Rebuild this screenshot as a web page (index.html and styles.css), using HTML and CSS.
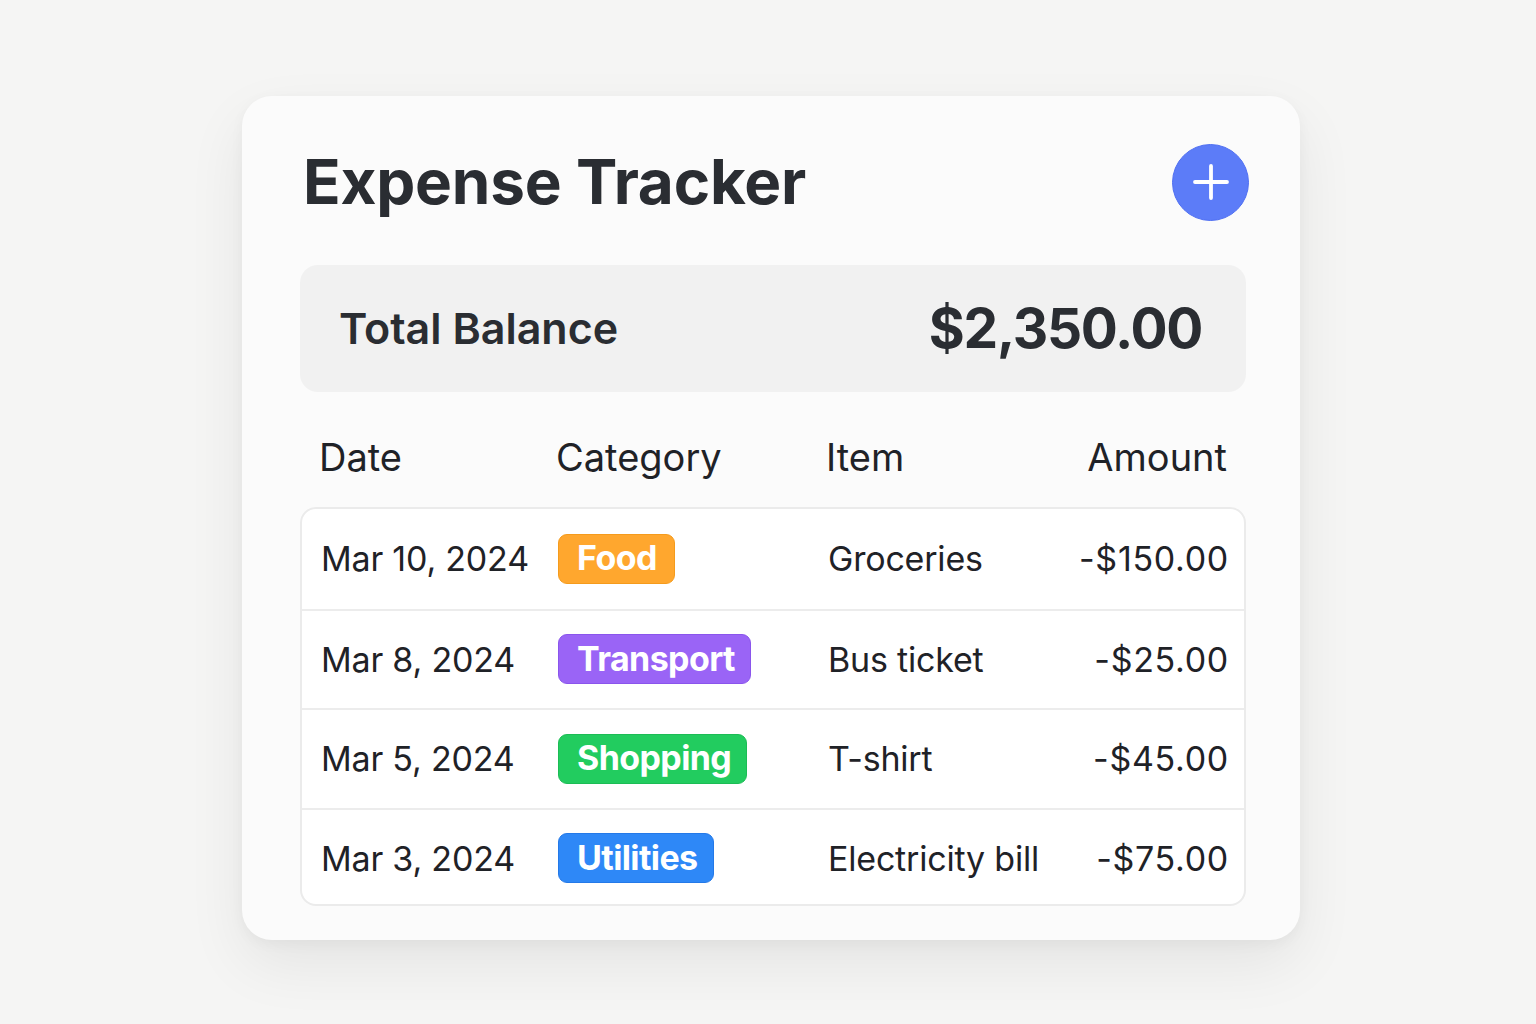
FILE: index.html
```html
<!DOCTYPE html>
<html lang="en">
<head>
<meta charset="utf-8">
<title>Expense Tracker</title>
<link rel="stylesheet" href="styles.css">
</head>
<body>
<main class="page">
  <section class="card">
    <header class="card-head">
      <h1 class="title">Expense Tracker</h1>
      <button class="add-btn" aria-label="Add expense">
        <svg width="36" height="36" viewBox="0 0 36 36" fill="none" stroke="#fff" stroke-width="3.8" stroke-linecap="round">
          <path d="M18 2v32M2 18h32"/>
        </svg>
      </button>
    </header>

    <div class="balance">
      <span class="balance-label">Total Balance</span>
      <span class="balance-value">$2,350.00</span>
    </div>

    <div class="thead grid">
      <span>Date</span>
      <span>Category</span>
      <span>Item</span>
      <span class="amount">Amount</span>
    </div>

    <div class="tbody">
      <div class="row grid">
        <span>Mar 10, 2024</span>
        <span><span class="badge food">Food</span></span>
        <span>Groceries</span>
        <span class="amount money">-$150.00</span>
      </div>
      <div class="row grid">
        <span>Mar 8, 2024</span>
        <span><span class="badge transport">Transport</span></span>
        <span>Bus ticket</span>
        <span class="amount money">-$25.00</span>
      </div>
      <div class="row grid">
        <span>Mar 5, 2024</span>
        <span><span class="badge shopping">Shopping</span></span>
        <span>T-shirt</span>
        <span class="amount money">-$45.00</span>
      </div>
      <div class="row grid">
        <span>Mar 3, 2024</span>
        <span><span class="badge utilities">Utilities</span></span>
        <span>Electricity bill</span>
        <span class="amount money">-$75.00</span>
      </div>
    </div>
  </section>
</main>
</body>
</html>
```

FILE: styles.css
```css
* { box-sizing: border-box; }

html, body {
  margin: 0;
  padding: 0;
}

body {
  width: 1536px;
  height: 1024px;
  background: #f5f5f4;
  font-family: Inter, "Noto Sans", "Liberation Sans", sans-serif;
  color: #1f2227;
  overflow: hidden;
}

.page {
  padding: 96px 0 0 242px;
}

.card {
  width: 1058px;
  height: 844px;
  background: #fbfbfb;
  border-radius: 30px;
  padding: 48px 54px 34px 58px;
  box-shadow: 0 24px 60px rgba(0, 0, 0, 0.07), 0 4px 14px rgba(0, 0, 0, 0.04);
  display: flex;
  flex-direction: column;
}

.card-head {
  display: flex;
  align-items: center;
  justify-content: space-between;
  height: 76px;
  padding-left: 3px;
}

.title {
  margin: 0;
  font-size: 62px;
  font-weight: 700;
  letter-spacing: -0.2px;
  color: #2a2d32;
  line-height: 1;
}

.add-btn {
  width: 77px;
  height: 77px;
  border-radius: 50%;
  border: 1px solid #4f6ff2;
  background: #5c7cf8;
  display: flex;
  align-items: center;
  justify-content: center;
  padding: 0;
  margin-right: -3px;
}

.balance {
  margin-top: 45px;
  height: 128px;
  background: #f1f1f1;
  border-radius: 18px;
  display: flex;
  align-items: center;
  justify-content: space-between;
  padding: 0 44px 0 39px;
}

.balance-label {
  font-size: 43px;
  font-weight: 600;
  color: #2a2d32;
  letter-spacing: 0;
}

.balance-value {
  font-size: 55px;
  font-weight: 700;
  color: #2a2d32;
  letter-spacing: -1.3px;
}

.grid {
  display: grid;
  grid-template-columns: 237px 270px 1fr auto;
  align-items: center;
}

.thead {
  height: 116px;
  padding: 14px 19px 0 19px;
  font-size: 38px;
  font-weight: 400;
  color: #1f2227;
}

.tbody {
  background: #ffffff;
  border: 2px solid #ebebeb;
  border-radius: 16px;
  overflow: hidden;
}

.row {
  height: 99.5px;
  padding: 0 16px 0 19px;
  font-size: 34px;
  letter-spacing: -0.2px;
  color: #1f2227;
  border-top: 2px solid #ececec;
}

.row:first-child {
  border-top: none;
}

.amount {
  text-align: right;
}

.money {
  letter-spacing: 0.7px;
  margin-right: -1px;
}

.badge {
  display: inline-flex;
  align-items: center;
  height: 50px;
  padding: 0 15px 2px 18px;
  border-radius: 9px;
  color: #fff;
  font-weight: 700;
  font-size: 34px;
  letter-spacing: -0.6px;
  border: 1.5px solid transparent;
}

.food { background: #ffa72e; border-color: #f59b1c; padding-right: 17px; }
.transport { background: #9a64f6; border-color: #8a55ec; }
.shopping { background: #22cc5f; border-color: #1cbc55; }
.utilities { background: #2e88f7; border-color: #2479e8; }
```
